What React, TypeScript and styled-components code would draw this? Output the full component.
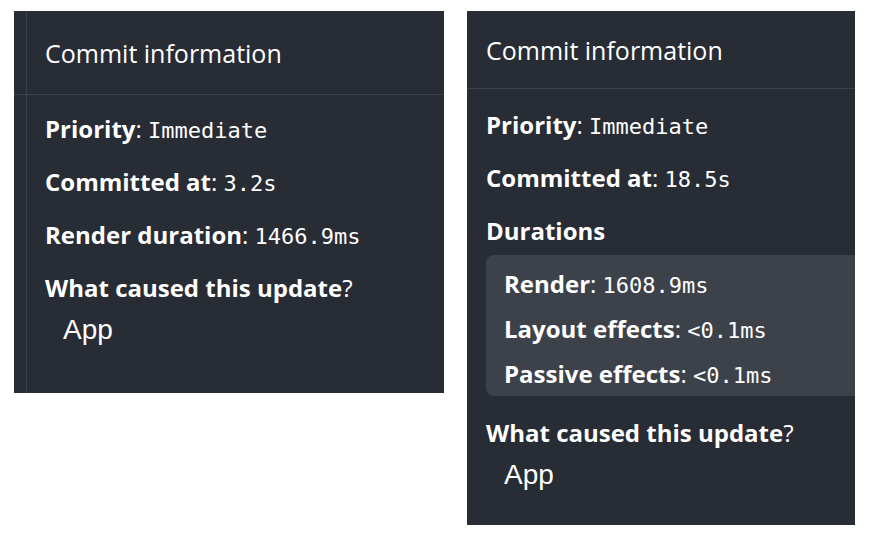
import React from 'react';
import styled, { createGlobalStyle } from 'styled-components';

const GlobalStyle = createGlobalStyle`
  body {
    margin: 0;
    background: #ffffff;
  }
`;

const Page = styled.div`
  display: flex;
  align-items: flex-start;
  gap: 23px;
  padding: 11px 0 0 14px;
`;

const Panel = styled.section<{ $width: number; $height: number; $rail?: boolean }>`
  width: ${(p) => p.$width}px;
  height: ${(p) => p.$height}px;
  box-sizing: border-box;
  background-color: #282c34;
  ${(p) =>
    p.$rail &&
    'background-image: linear-gradient(to right, transparent 12px, #3a3f48 12px, #3a3f48 13px, transparent 13px);'}
  color: #ffffff;
  font-family: 'Open Sans', 'Noto Sans', sans-serif;
  overflow: hidden;
`;

const Header = styled.div<{ $height: number; $indent: number }>`
  height: ${(p) => p.$height}px;
  display: flex;
  align-items: center;
  padding-left: ${(p) => p.$indent}px;
  border-bottom: 1px solid #3d424a;
  font-size: 25px;
`;

const Body = styled.div<{ $indent: number; $top: number }>`
  padding: ${(p) => p.$top}px 0 0 ${(p) => p.$indent}px;
`;

const Row = styled.div<{ $lh?: number }>`
  font-size: 24px;
  height: ${(p) => p.$lh ?? 53}px;
  line-height: ${(p) => p.$lh ?? 53}px;
  white-space: nowrap;
`;

const Label = styled.b`
  font-weight: 700;
`;

const Value = styled.span`
  font-family: 'DejaVu Sans Mono', monospace;
  font-size: 22px;
  line-height: 0;
`;

const Durations = styled.div`
  background: #3d424a;
  border-radius: 8px;
  margin: -2px -20px 10px 0;
  padding: 6px 18px 0;
  height: 141px;
  box-sizing: border-box;
`;

const Cause = styled.div`
  font-family: 'Liberation Sans', Arial, sans-serif;
  font-size: 28px;
  line-height: 31px;
  padding-left: 18px;
`;

const Field = ({ name, value, lh }: { name: string; value: string; lh?: number }) => (
  <Row $lh={lh}>
    <Label>{name}</Label>: <Value>{value}</Value>
  </Row>
);

const App: React.FC = () => (
  <>
    <GlobalStyle />
    <Page>
      <Panel $width={430} $height={382} $rail>
        <Header $height={83} $indent={31}>Commit information</Header>
        <Body $indent={31} $top={7}>
          <Field name="Priority" value="Immediate" />
          <Field name="Committed at" value="3.2s" />
          <Field name="Render duration" value="1466.9ms" />
          <Row>
            <Label>What caused this update</Label>?
          </Row>
          <Cause>App</Cause>
        </Body>
      </Panel>
      <Panel $width={388} $height={514}>
        <Header $height={77} $indent={19}>Commit information</Header>
        <Body $indent={19} $top={9}>
          <Field name="Priority" value="Immediate" />
          <Field name="Committed at" value="18.5s" />
          <Row>
            <Label>Durations</Label>
          </Row>
          <Durations>
            <Field name="Render" value="1608.9ms" lh={45} />
            <Field name="Layout effects" value="<0.1ms" lh={45} />
            <Field name="Passive effects" value="<0.1ms" lh={45} />
          </Durations>
          <Row>
            <Label>What caused this update</Label>?
          </Row>
          <Cause>App</Cause>
        </Body>
      </Panel>
    </Page>
  </>
);

export default App;
